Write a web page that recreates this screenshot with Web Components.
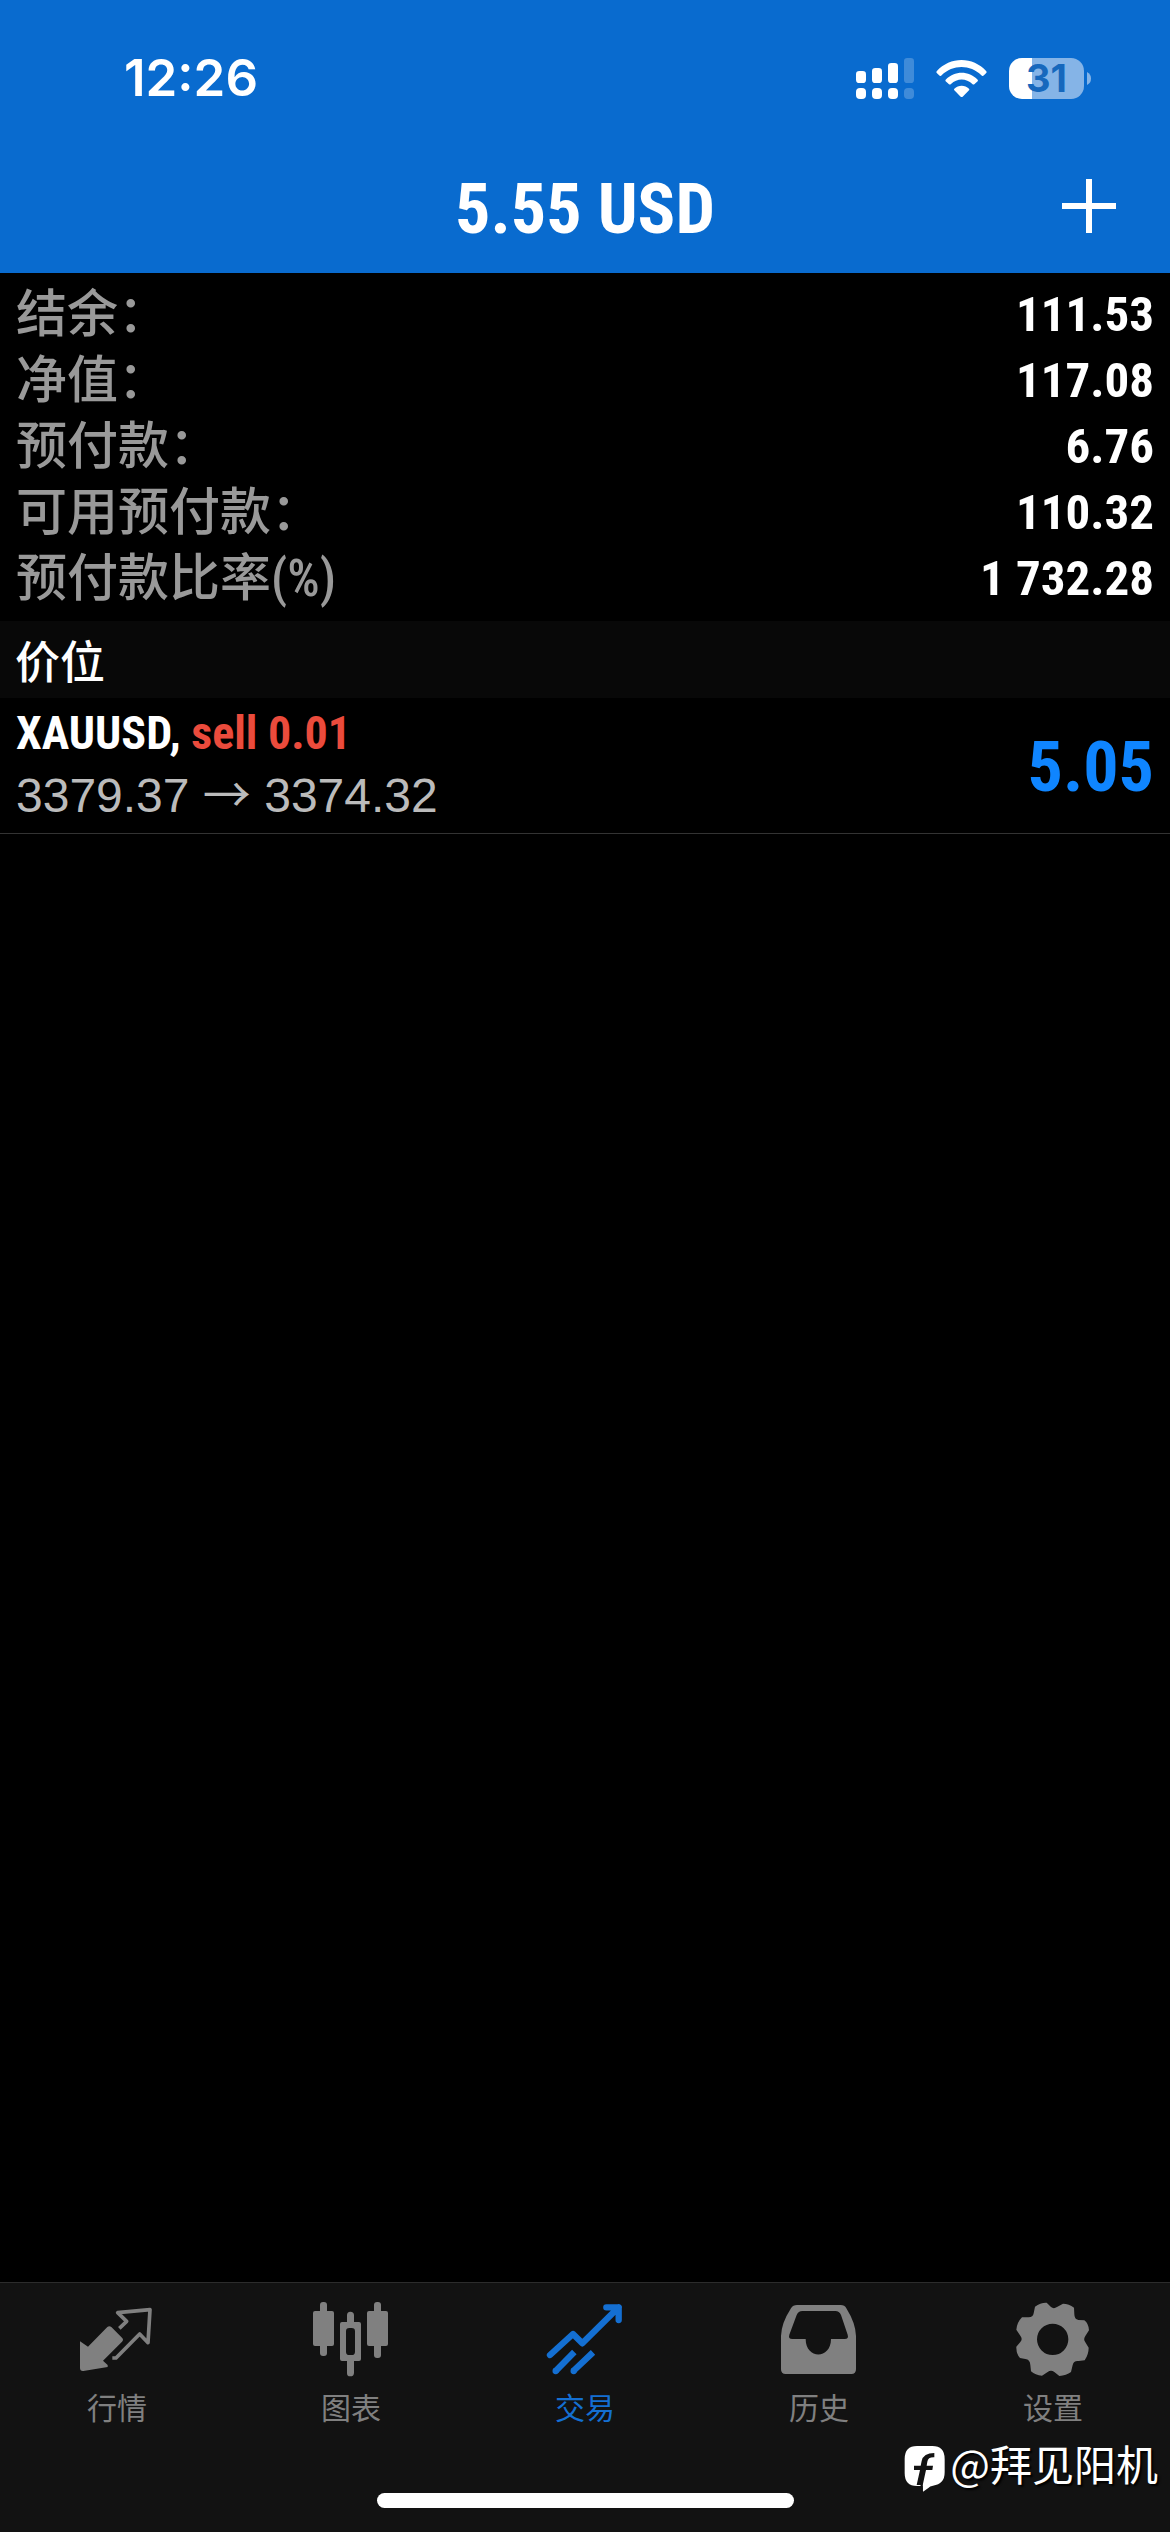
<!DOCTYPE html>
<html lang="zh-CN">
<head>
<meta charset="utf-8">
<meta name="viewport" content="width=device-width, initial-scale=1">
<title>交易</title>
<style>
  html, body { margin: 0; background: #000; }
  body {
    --brand: #096bcf;
    --cond: "Roboto Condensed", "Noto Sans CJK SC", sans-serif;
    --cjk: "Noto Sans CJK SC", sans-serif;
    --ui: Inter, "Noto Sans CJK SC", sans-serif;
    --edge: 16px;
    font-family: var(--cjk);
    color: #fff;
  }
</style>
</head>
<body>
<trade-app></trade-app>
<script>
const define = (name, html) => {
  const template = document.createElement('template');
  template.innerHTML = html;
  customElements.define(name, class extends HTMLElement {
    constructor() {
      super();
      this.attachShadow({ mode: 'open' }).append(template.content.cloneNode(true));
    }
  });
};

define('status-bar', `
<style>
  :host { display: flex; align-items: center; justify-content: space-between; box-sizing: border-box;
    height: 144px; padding: 12px 79px 0 124px; font-family: var(--ui); }
  time { font-size: 51px; font-weight: 600; line-height: 60px; }
  .icons { display: flex; align-items: center; gap: 22px; }
  svg { display: block; }
  .battery { display: flex; align-items: center; gap: 3px; }
  .cell { width: 75px; height: 41px; border-radius: 13px; text-align: center; font-size: 38px; line-height: 41px;
    font-weight: 700; color: #1668bd; background: linear-gradient(90deg, #fff 23px, #85b4e7 23px); }
</style>
<time>12:26</time>
<div class="icons">
  <svg width="58" height="41" viewBox="108 81 174 123" fill="#fff" aria-hidden="true">
    <rect x="108" y="120" width="30" height="36" rx="10"/><rect x="156" y="111" width="30" height="45" rx="10"/>
    <rect x="204" y="96" width="30" height="60" rx="10"/>
    <rect x="108" y="171" width="30" height="33" rx="12"/><rect x="156" y="171" width="30" height="33" rx="12"/>
    <rect x="204" y="171" width="30" height="33" rx="12"/>
    <g opacity=".22"><rect x="252" y="81" width="30" height="75" rx="10"/><rect x="252" y="171" width="30" height="33" rx="12"/></g>
  </svg>
  <svg width="51" height="37" viewBox="348 87 153 111" fill="#fff" aria-hidden="true">
    <path d="M350 121C390 76 459 76 499 121Q501 124 498 127L490 134Q487 136 484 133C451 100 398 100 365 133Q362 136 359 134L351 127Q348 124 350 121Z"/>
    <path d="M377 146C404 118 446 118 473 146Q475 149 473 151L463 160Q460 162 457 159C439 141 411 141 393 159Q390 162 387 160L377 151Q375 149 377 146Z"/>
    <path d="M403 173C415 161 435 161 447 173Q449 176 447 178L428 197Q425 199 422 197L403 178Q401 176 403 173Z"/>
  </svg>
  <div class="battery"><div class="cell">31</div>
    <svg width="4" height="13" viewBox="0 0 4 13"><path d="M0 0Q4 2 4 6.500T0 13Z" fill="#85b4e7"/></svg>
  </div>
</div>`);

define('title-bar', `
<style>
  :host { display: grid; grid-template-columns: 1fr auto 1fr; align-items: center; height: 129px; padding: 0 54px; }
  h1 { grid-column: 2; margin: 0; font: 700 70px/80px var(--cond); }
  button { justify-self: end; display: block; padding: 0; border: 0; background: none; color: inherit; margin-bottom: 5px; }
  svg { display: block; }
</style>
<h1><slot></slot></h1>
<button type="button" aria-label="+"><svg width="54" height="54" viewBox="0 0 54 54" fill="#fff"><path d="M24 0h6v24h24v6H30v24h-6V30H0v-6h24z"/></svg></button>`);

define('account-row', `
<style>
  :host { display: flex; justify-content: space-between; align-items: center; height: 66px; padding: 0 var(--edge); }
  .label { font: 500 51px/66px var(--cond); color: #999; }
  .value { font: 700 49px/66px var(--cond); color: #fff; }
</style>
<span class="label"><slot name="label"></slot></span><span class="value"><slot></slot></span>`);

define('section-head', `
<style>
  :host { display: block; background: #080808; padding: 0 15px; }
  h2 { margin: 0; font: 500 45px/77px var(--cjk); }
</style>
<h2><slot></slot></h2>`);

define('position-row', `
<style>
  :host { display: flex; justify-content: space-between; align-items: center; padding: 4px var(--edge) 6px; border-bottom: 1px solid #333; }
  .name { font: 700 46px/63px var(--cond); }
  .side { color: #eb4b3c; }
  .prices { font: 400 48px/62px "Liberation Sans", sans-serif; color: #bbb; }
  .arrow { font-family: var(--cjk); font-weight: 400; line-height: 0; }
  .profit { padding-top: 5px; font: 700 70px/80px var(--cond); color: #0f85ff; }
</style>
<div>
  <div class="name"><slot name="symbol"></slot>, <span class="side"><slot name="side"></slot></span></div>
  <div class="prices"><slot name="open"></slot> <span class="arrow">→</span> <slot name="price"></slot></div>
</div>
<div class="profit"><slot></slot></div>`);

define('tab-item', `
<style>
  :host { flex: 1; display: block; color: #808080; }
  :host([active]) { color: #146fd2; }
  a { display: flex; flex-direction: column; align-items: center; gap: 6px; color: inherit; text-decoration: none; font: 400 30px/40px var(--cjk); }
  ::slotted(svg) { display: block; width: 80px; height: 80px; }
</style>
<a href="#"><slot name="icon"></slot><slot></slot></a>`);

define('user-mark', `
<style>
  :host { position: absolute; right: 12px; bottom: 39px; display: flex; align-items: center; gap: 4px;
    font: 400 42px/60px var(--cjk); color: #fff; text-shadow: 2px 2px 2px #000; }
  svg { display: block; margin-top: 12px; }
</style>
<svg width="42" height="48" viewBox="501 558 126 144" aria-hidden="true">
  <path fill="#fff" d="M540 561H586Q623 561 623 600V640Q623 676 588 680Q579 681 573 688L558 698L557 681H540Q503 681 503 642V600Q503 561 540 561Z"/>
  <path fill="#121212" d="M592 582V595Q573 594 571 608L569 620H588L586 633H567L558 674Q556 684 558 697L550 678H539L549 633H531V620H551L554 606Q559 582 592 582Z"/>
</svg>
<span><slot></slot></span>`);

define('tab-bar', `
<style>
  :host { position: relative; display: block; box-sizing: border-box; height: 250px; padding-top: 17px; background: #121212; border-top: 1px solid #2c2c2c; }
  nav { display: flex; }
  .home { width: 417px; height: 15px; margin: 67px auto 0; border-radius: 8px; background: #fff; }
</style>
<nav>
  <tab-item>
    <svg slot="icon" viewBox="231 120 240 240" fill="currentColor">
      <path d="M240 244L264 260L322 201Q328 196 334 201L366 233Q372 239 366 245L309 302L323 315V321L250 333Q240 334 240 324Z"/>
      <path fill="none" stroke="currentColor" stroke-width="11" stroke-linejoin="round" d="M358 205L380 184L353 158L450 149L444 248L419 222L348 294L337 294"/>
    </svg>行情</tab-item>
  <tab-item>
    <svg slot="icon" viewBox="933 120 240 240" fill="currentColor">
      <rect x="960" y="126" width="21" height="162" rx="9"/><rect x="939" y="153" width="63" height="105" rx="6"/>
      <rect x="1122" y="126" width="21" height="168" rx="9"/><rect x="1101" y="153" width="63" height="105" rx="6"/>
      <path fill-rule="evenodd" d="M1051 155Q1062 155 1062 166V186H1077Q1083 186 1083 192V297Q1083 303 1077 303H1062V338Q1062 349 1051 349T1041 338V303H1026Q1020 303 1020 297V192Q1020 186 1026 186H1041V166Q1041 155 1051 155ZM1048 204Q1038 204 1038 214V275Q1038 285 1048 285H1055Q1065 285 1065 275V214Q1065 204 1055 204Z"/>
    </svg>图表</tab-item>
  <tab-item active>
    <svg slot="icon" viewBox="315 120 240 240" fill="none" stroke="currentColor" stroke-width="19">
      <path stroke-linecap="round" stroke-linejoin="round" d="M330 285L399 222L427 250L536 142M499 142H536V180"/>
      <path d="M347 333L403 276M400 333L459 277"/>
      <g fill="currentColor" stroke="none"><circle cx="347" cy="333" r="9.500"/><circle cx="401" cy="333" r="9.500"/></g>
    </svg>交易</tab-item>
  <tab-item>
    <svg slot="icon" viewBox="117 120 240 240" fill="currentColor">
      <path fill-rule="evenodd" d="M171 135H302Q314 135 319 145Q347 190 348 228V328Q348 342 334 342H137Q123 342 123 328V228Q124 190 153 145Q159 135 171 135ZM187 153Q175 153 170 165L148 224Q144 237 157 237H197C197 299 273 299 273 237H314Q327 237 323 224L303 165Q298 153 286 153Z"/>
    </svg>历史</tab-item>
  <tab-item>
    <svg slot="icon" viewBox="819 120 240 240" fill="currentColor">
      <path fill-rule="evenodd" d="M885 140Q902 127 920 128L933 141Q941 148 951 141L969 131Q987 131 1002 143L1003 163Q1003 178 1015 180L1033 181Q1046 191 1047 211L1036 228Q1029 238 1036 247L1046 263Q1046 283 1034 301L1016 303Q1001 301 998 315L993 336Q979 347 958 348L943 336Q933 328 923 336L906 347Q886 346 873 334L871 315Q870 299 856 297L840 294Q828 280 829 260L841 246Q849 237 841 227L829 209Q831 187 846 172L864 172Q879 173 881 160ZM938 191A47 47 0 1 0 938 285A47 47 0 1 0 938 191Z"/>
    </svg>设置</tab-item>
</nav>
<div class="home"></div>
<user-mark>@拜见阳机</user-mark>`);

define('trade-app', `
<style>
  :host { display: flex; flex-direction: column; min-height: 100vh; background: #000; }
  header { background: var(--brand); }
  main { flex: 1; }
  .account { padding: 9px 0; }
</style>
<header>
  <status-bar></status-bar>
  <title-bar>5.55 USD</title-bar>
</header>
<main>
  <section class="account">
    <account-row><span slot="label">结余：</span>111.53</account-row>
    <account-row><span slot="label">净值：</span>117.08</account-row>
    <account-row><span slot="label">预付款：</span>6.76</account-row>
    <account-row><span slot="label">可用预付款：</span>110.32</account-row>
    <account-row><span slot="label">预付款比率(%)</span>1 732.28</account-row>
  </section>
  <section-head>价位</section-head>
  <position-row>
    <span slot="symbol">XAUUSD</span><span slot="side">sell 0.01</span>
    <span slot="open">3379.37</span><span slot="price">3374.32</span>5.05
  </position-row>
</main>
<tab-bar></tab-bar>`);
</script>
</body>
</html>
